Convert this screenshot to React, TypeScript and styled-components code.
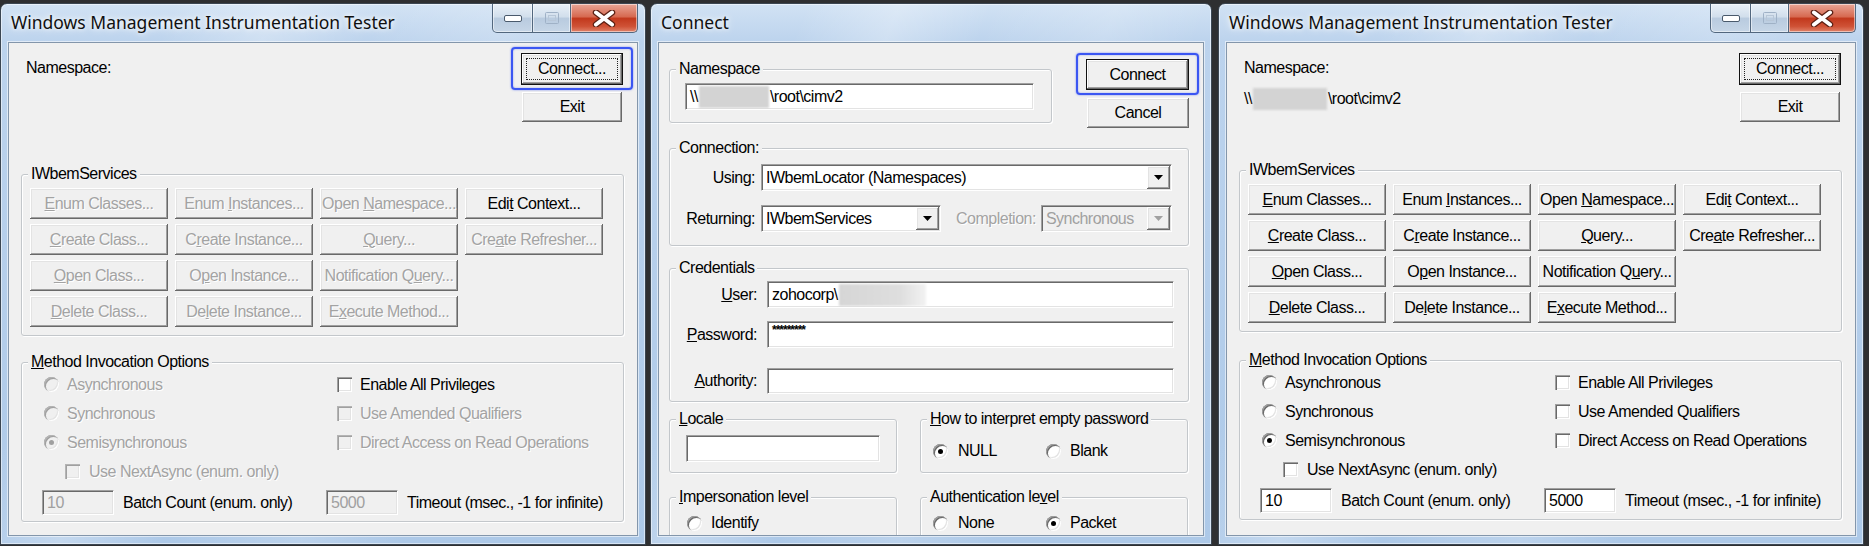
import React from "react";
import styled, { createGlobalStyle, css } from "styled-components";

const GlobalStyle = createGlobalStyle`
  html, body {
    margin: 0;
    padding: 0;
    background: #2e2f31;
  }
  body {
    font-family: "Liberation Sans", Arial, sans-serif;
    font-size: 16px;
    letter-spacing: -0.5px;
    color: #000;
  }
  #root {
    height: 546px;
    overflow: hidden;
  }
`;

const Desktop = styled.div`
  display: flex;
  align-items: flex-start;
  height: 546px;
  box-sizing: border-box;
  padding-top: 3px;
  background: #2e2f31;
  overflow: hidden;
`;

const Win = styled.div<{ $w: number; $gap?: number }>`
  flex: none;
  width: ${(p) => p.$w}px;
  margin-left: ${(p) => p.$gap ?? 0}px;
  box-sizing: border-box;
  border: 1px solid #3b4652;
  border-radius: 7px 7px 0 0;
  padding: 0 7px 8px;
  background: linear-gradient(
      112deg,
      rgba(255, 255, 255, 0) 20%,
      rgba(255, 255, 255, 0.28) 32%,
      rgba(255, 255, 255, 0) 44%,
      rgba(255, 255, 255, 0.18) 60%,
      rgba(255, 255, 255, 0) 72%
    ),
    linear-gradient(180deg, #d1e2f4 0px, #bcd3ed 38px, #adc9e8 100%);
  box-shadow: inset 0 0 0 1px rgba(255, 255, 255, 0.5);
`;

const TitleBar = styled.div`
  height: 38px;
  display: flex;
  justify-content: space-between;
  align-items: flex-start;
  padding-left: 3px;
`;

const Title = styled.div`
  font-family: "Noto Sans", "Open Sans", sans-serif;
  font-size: 17.5px;
  letter-spacing: 0;
  line-height: 20px;
  margin-top: 8px;
  color: #101010;
  text-shadow: 0 0 8px #fff, 0 0 4px rgba(255, 255, 255, 0.9);
`;

const Caption = styled.div`
  display: flex;
  height: 29px;
`;

const CapBtn = styled.div<{ $kind: "min" | "max" | "close" }>`
  width: ${(p) => (p.$kind === "close" ? 66 : p.$kind === "min" ? 39 : 37)}px;
  display: flex;
  align-items: center;
  justify-content: center;
  border: 1px solid #52677e;
  border-top: none;
  margin-left: -1px;
  box-shadow: inset 0 0 0 1px rgba(255, 255, 255, 0.5);
  background: ${(p) =>
    p.$kind === "close"
      ? "linear-gradient(180deg, #e8a696 0%, #d76a51 45%, #c2391d 52%, #cf5236 80%, #e0836b 100%)"
      : "linear-gradient(180deg, #e9f0f8 0%, #d2dfec 45%, #b9cbdf 52%, #c6d6e7 100%)"};
  &:first-child {
    margin-left: 0;
    border-bottom-left-radius: 5px;
  }
  &:last-child {
    border-bottom-right-radius: 5px;
  }
`;

const Client = styled.div`
  height: 492px;
  background: #f0f0f0;
  border: 1px solid #8396ab;
  box-shadow: 0 0 0 1px rgba(255, 255, 255, 0.55);
  overflow: hidden;
`;

/* ---------- classic controls ---------- */

const raised = css`
  background: #f0f0f0;
  box-shadow: inset -1px -1px 0 #696969, inset 1px 1px 0 #fff,
    inset -2px -2px 0 #a0a0a0, inset 2px 2px 0 #e3e3e3;
`;

const Btn = styled.button<{ $w: number; $h: number; $off?: boolean; $default?: boolean; $focus?: boolean }>`
  ${raised};
  position: relative;
  flex: none;
  width: ${(p) => p.$w}px;
  height: ${(p) => p.$h}px;
  box-sizing: border-box;
  padding: 0;
  border: ${(p) => (p.$default ? "1px solid #111" : "none")};
  font: inherit;
  letter-spacing: inherit;
  white-space: nowrap;
  color: ${(p) => (p.$off ? "#a3a3a3" : "#000")};
  text-shadow: ${(p) => (p.$off ? "1px 1px 0 #fff" : "none")};
  ${(p) =>
    p.$focus &&
    css`
      &::after {
        content: "";
        position: absolute;
        inset: 4px;
        border: 1px dotted #222;
      }
    `}
`;

const Marked = styled.div`
  position: relative;
  display: flex;
  &::before {
    content: "";
    position: absolute;
    inset: -6px -10px -5px -10px;
    border: 2px solid #3b56f2;
    border-radius: 4px;
    box-shadow: 0 0 2px rgba(59, 86, 242, 0.7), inset 0 0 2px rgba(59, 86, 242, 0.5);
  }
`;

const BtnCol = styled.div<{ $gap: number }>`
  display: flex;
  flex-direction: column;
  align-items: flex-end;
  gap: ${(p) => p.$gap}px;
`;

const Field = styled.div<{ $w?: number; $h?: number; $off?: boolean }>`
  box-sizing: border-box;
  flex: ${(p) => (p.$w ? "none" : "1")};
  width: ${(p) => (p.$w ? `${p.$w}px` : "auto")};
  min-width: 0;
  height: ${(p) => p.$h ?? 27}px;
  background: ${(p) => (p.$off ? "#f0f0f0" : "#fff")};
  color: ${(p) => (p.$off ? "#a0a0a0" : "#000")};
  border: 1px solid;
  border-color: #a0a0a0 #fff #fff #a0a0a0;
  box-shadow: inset 1px 1px 0 #696969, inset -1px -1px 0 #e3e3e3;
  padding: 0 1px 0 4px;
  display: flex;
  align-items: center;
  white-space: nowrap;
  overflow: hidden;
`;

const Stars = styled.span`
  font-size: 12px;
  letter-spacing: -1px;
  align-self: flex-start;
  margin-top: 1px;
  font-weight: bold;
`;

const Redacted = styled.span<{ $w: number; $fade?: boolean }>`
  display: inline-block;
  width: ${(p) => p.$w}px;
  height: 22px;
  margin: 0 1px;
  background: ${(p) =>
    p.$fade ? "linear-gradient(90deg, #d6d6d6 0%, #dedede 70%, #f2f2f2 100%)" : "#d3d3d3"};
  filter: blur(1.2px);
`;

const DropBtn = styled.span<{ $off?: boolean }>`
  ${raised};
  margin-left: auto;
  flex: none;
  width: 23px;
  height: 23px;
  display: flex;
  align-items: center;
  justify-content: center;
  color: ${(p) => (p.$off ? "#a0a0a0" : "#000")};
`;

const Tick = styled.span<{ $round?: boolean; $off?: boolean }>`
  position: relative;
  flex: none;
  width: 15px;
  height: 15px;
  box-sizing: border-box;
  border-radius: ${(p) => (p.$round ? "50%" : "0")};
  background: ${(p) => (p.$off ? "#f0f0f0" : "#fff")};
  box-shadow: ${(p) =>
    p.$off
      ? "inset 1px 1px 0 #b4b4b4, inset 2px 2px 0 #a0a0a0, inset -1px -1px 0 #fff, inset -2px -2px 0 #e3e3e3"
      : "inset 1px 1px 0 #a0a0a0, inset 2px 2px 0 #696969, inset -1px -1px 0 #fff, inset -2px -2px 0 #e3e3e3"};
`;

const Dot = styled.span<{ $off?: boolean }>`
  position: absolute;
  left: 5px;
  top: 5px;
  width: 5px;
  height: 5px;
  border-radius: 50%;
  background: ${(p) => (p.$off ? "#a0a0a0" : "#000")};
`;

const Option = styled.div<{ $off?: boolean; $gap?: number; $indent?: number }>`
  display: flex;
  align-items: center;
  gap: ${(p) => p.$gap ?? 8}px;
  padding-left: ${(p) => p.$indent ?? 0}px;
  white-space: nowrap;
  color: ${(p) => (p.$off ? "#a3a3a3" : "#000")};
  text-shadow: ${(p) => (p.$off ? "1px 1px 0 #fff" : "none")};
`;

const GroupBox = styled.fieldset`
  margin: 0;
  min-width: 0;
  padding: 0;
  border: 1px solid #c3c7cb;
  border-radius: 3px;
  box-shadow: inset 1px 1px 0 #fff, 1px 1px 0 #fff;
`;

const Legend = styled.legend`
  margin-left: 6px;
  padding: 0 3px;
  line-height: 16px;
  background: #f0f0f0;
  white-space: nowrap;
`;

const GroupBody = styled.div<{ $pad: string }>`
  padding: ${(p) => p.$pad};
`;

const Label = styled.span<{ $off?: boolean }>`
  white-space: nowrap;
  color: ${(p) => (p.$off ? "#a3a3a3" : "#000")};
  text-shadow: ${(p) => (p.$off ? "1px 1px 0 #fff" : "none")};
`;

function Group({
  legend,
  pad,
  top,
  width,
  children,
}: {
  legend: string;
  pad: string;
  top?: number;
  width?: number;
  children?: React.ReactNode;
}) {
  return (
    <GroupBox style={{ marginTop: top ?? 0, width }}>
      <Legend>
        <Mn text={legend} />
      </Legend>
      <GroupBody $pad={pad}>{children}</GroupBody>
    </GroupBox>
  );
}

/* ---------- tester window ---------- */

const TopRow = styled.div<{ $pad: string }>`
  display: flex;
  justify-content: space-between;
  align-items: flex-start;
  padding: ${(p) => p.$pad};
`;

const NsInfo = styled.div`
  display: flex;
  flex-direction: column;
  gap: 13px;
  padding-top: 6px;
  line-height: 18px;
`;

const NsPath = styled.div`
  display: flex;
  align-items: center;
  height: 18px;
`;

const TesterBody = styled.div`
  display: flex;
  flex-direction: column;
  padding: 0 13px 0 12px;
`;

const ServiceGrid = styled.div`
  display: grid;
  grid-template-columns: repeat(4, 138px);
  grid-auto-rows: 31px;
  gap: 5px 7px;
`;

const OptionGrid = styled.div`
  display: grid;
  grid-template-columns: 293px 1fr;
  grid-auto-rows: 29px;
  align-items: center;
  padding-left: 22px;
`;

const NumberRow = styled.div`
  display: grid;
  grid-template-columns: 284px 1fr;
  margin-top: 4px;
  padding-left: 20px;
`;

const NumberCell = styled.div`
  display: flex;
  align-items: center;
  gap: 9px;
`;

function Mn({ text }: { text: string }) {
  const i = text.indexOf("&");
  if (i < 0) return <>{text}</>;
  return (
    <>
      {text.slice(0, i)}
      <u>{text[i + 1]}</u>
      {text.slice(i + 2)}
    </>
  );
}

function Arrow() {
  return (
    <svg width="9" height="5" viewBox="0 0 9 5">
      <polygon points="0,0 9,0 4.5,5" fill="currentColor" />
    </svg>
  );
}

function Radio({ on, off }: { on?: boolean; off?: boolean }) {
  return <Tick $round $off={off}>{on && <Dot $off={off} />}</Tick>;
}

function CaptionButtons() {
  return (
    <Caption>
      <CapBtn $kind="min">
        <svg width="18" height="7" viewBox="0 0 18 7">
          <rect x="0.5" y="0.5" width="17" height="6" rx="1.5" fill="#fff" stroke="#4a5a6c" />
        </svg>
      </CapBtn>
      <CapBtn $kind="max">
        <svg width="14" height="12" viewBox="0 0 14 12">
          <rect x="0.5" y="0.5" width="13" height="11" rx="1" fill="none" stroke="#9fb1c6" />
          <rect x="3.5" y="3.5" width="7" height="5" fill="none" stroke="#b8c7d8" />
        </svg>
      </CapBtn>
      <CapBtn $kind="close">
        <svg width="24" height="17" viewBox="0 0 24 17">
          <path d="M4 2.5 L20 14.5 M20 2.5 L4 14.5" stroke="#5a2014" strokeWidth="6.4" strokeLinecap="round" />
          <path d="M4 2.5 L20 14.5 M20 2.5 L4 14.5" stroke="#fff" strokeWidth="4" strokeLinecap="round" />
        </svg>
      </CapBtn>
    </Caption>
  );
}

const services: (string | null)[] = [
  "&Enum Classes...",
  "Enum &Instances...",
  "Open &Namespace...",
  "Edi&t Context...",
  "&Create Class...",
  "C&reate Instance...",
  "&Query...",
  "Cre&ate Refresher...",
  "&Open Class...",
  "O&pen Instance...",
  "Notification Q&uery...",
  null,
  "&Delete Class...",
  "De&lete Instance...",
  "E&xecute Method...",
  null,
];

function TesterWindow({ live, gap, marked }: { live: boolean; gap?: number; marked?: boolean }) {
  const connect = (
    <Btn $w={102} $h={32} $default $focus>
      Connect...
    </Btn>
  );
  return (
    <Win $w={646} $gap={gap}>
      <TitleBar>
        <Title>Windows Management Instrumentation Tester</Title>
        <CaptionButtons />
      </TitleBar>
      <Client>
        <TopRow $pad="10px 14px 0 17px">
          <NsInfo>
            <span>Namespace:</span>
            {live && (
              <NsPath>
                \\<Redacted $w={74} />\root\cimv2
              </NsPath>
            )}
          </NsInfo>
          <BtnCol $gap={7}>
            {marked ? <Marked>{connect}</Marked> : connect}
            <Btn $w={100} $h={30} style={{ marginRight: 1 }}>
              Exit
            </Btn>
          </BtnCol>
        </TopRow>
        <TesterBody>
          <Group legend="IWbemServices" pad="6px 0 8px 8px" top={live ? 40 : 44}>
            <ServiceGrid>
              {services.map((s, i) =>
                s ? (
                  <Btn key={i} $w={138} $h={31} $off={!live && !s.startsWith("Edi")}>
                    <Mn text={s} />
                  </Btn>
                ) : (
                  <span key={i} />
                )
              )}
            </ServiceGrid>
          </Group>
          <Group legend="&Method Invocation Options" pad="0 0 6px 0" top={live ? 20 : 18}>
            <OptionGrid>
              <Option $off={!live}>
                <Radio off={!live} />
                Asynchronous
              </Option>
              <Option>
                <Tick />
                Enable All Privileges
              </Option>
              <Option $off={!live}>
                <Radio off={!live} />
                Synchronous
              </Option>
              <Option $off={!live}>
                <Tick $off={!live} />
                Use Amended Qualifiers
              </Option>
              <Option $off={!live}>
                <Radio on off={!live} />
                Semisynchronous
              </Option>
              <Option $off={!live}>
                <Tick $off={!live} />
                Direct Access on Read Operations
              </Option>
              <Option $off={!live} $indent={21} $gap={9}>
                <Tick $off={!live} />
                Use NextAsync (enum. only)
              </Option>
            </OptionGrid>
            <NumberRow>
              <NumberCell>
                <Field $w={72} $h={25} $off={!live}>
                  10
                </Field>
                <Label>Batch Count (enum. only)</Label>
              </NumberCell>
              <NumberCell>
                <Field $w={72} $h={25} $off={!live}>
                  5000
                </Field>
                <Label>Timeout (msec., -1 for infinite)</Label>
              </NumberCell>
            </NumberRow>
          </Group>
        </TesterBody>
      </Client>
    </Win>
  );
}

/* ---------- connect dialog ---------- */

const DialogBody = styled.div`
  display: flex;
  flex-direction: column;
  padding: 0 14px 0 10px;
`;

const FormRow = styled.div<{ $label: number; $gap: number; $top?: number }>`
  display: grid;
  grid-template-columns: ${(p) => p.$label}px 1fr;
  column-gap: ${(p) => p.$gap}px;
  align-items: center;
  margin-top: ${(p) => p.$top ?? 0}px;
`;

const RightLabel = styled.span`
  text-align: right;
  white-space: nowrap;
`;

const Inline = styled.div`
  display: flex;
  align-items: center;
`;

const Pair = styled.div<{ $top: number }>`
  display: grid;
  grid-template-columns: 228px 268px;
  column-gap: 23px;
  margin-top: ${(p) => p.$top}px;
`;

const RadioPair = styled.div`
  display: grid;
  grid-template-columns: 113px 1fr;
  height: 24px;
  align-items: center;
`;

function ConnectDialog() {
  return (
    <Win $w={562} $gap={4}>
      <TitleBar>
        <Title>Connect</Title>
      </TitleBar>
      <Client>
        <TopRow $pad="16px 14px 0 10px">
          <Group legend="Namespace" pad="6px 0 12px 15px" top={2} width={381}>
            <Field $w={349}>
              \\<Redacted $w={70} />\root\cimv2
            </Field>
          </Group>
          <BtnCol $gap={8}>
            <Marked>
              <Btn $w={103} $h={31} $default>
                Connect
              </Btn>
            </Marked>
            <Btn $w={102} $h={30}>
              Cancel
            </Btn>
          </BtnCol>
        </TopRow>
        <DialogBody>
          <Group legend="Connection:" pad="8px 16px 13px 5px" top={12}>
            <FormRow $label={80} $gap={6}>
              <RightLabel>Using:</RightLabel>
              <Field>
                IWbemLocator (Namespaces)
                <DropBtn>
                  <Arrow />
                </DropBtn>
              </Field>
            </FormRow>
            <FormRow $label={80} $gap={6} $top={14}>
              <RightLabel>Returning:</RightLabel>
              <Inline>
                <Field $w={180}>
                  IWbemServices
                  <DropBtn>
                    <Arrow />
                  </DropBtn>
                </Field>
                <Label $off style={{ margin: "0 5px 0 15px" }}>
                  Completion:
                </Label>
                <Field $off>
                  Synchronous
                  <DropBtn $off>
                    <Arrow />
                  </DropBtn>
                </Field>
              </Inline>
            </FormRow>
          </Group>
          <Group legend="Credentials" pad="5px 14px 7px 5px" top={14}>
            <FormRow $label={82} $gap={10}>
              <RightLabel>
                <Mn text="&User:" />
              </RightLabel>
              <Field>
                zohocorp\<Redacted $w={87} $fade />
              </Field>
            </FormRow>
            <FormRow $label={82} $gap={10} $top={13}>
              <RightLabel>
                <Mn text="&Password:" />
              </RightLabel>
              <Field>
                <Stars>*********</Stars>
              </Field>
            </FormRow>
            <FormRow $label={82} $gap={10} $top={20}>
              <RightLabel>
                <Mn text="&Authority:" />
              </RightLabel>
              <Field $h={26} />
            </FormRow>
          </Group>
          <Pair $top={9}>
            <Group legend="&Locale" pad="8px 0 9px 16px">
              <Field $w={194} />
            </Group>
            <Group legend="&How to interpret empty password" pad="12px 0 9px 12px">
              <RadioPair>
                <Option $gap={10}>
                  <Radio on />
                  NULL
                </Option>
                <Option $gap={9}>
                  <Radio />
                  Blank
                </Option>
              </RadioPair>
            </Group>
          </Pair>
          <Pair $top={16}>
            <Group legend="&Impersonation level" pad="6px 0 40px 17px">
              <RadioPair>
                <Option $gap={9}>
                  <Radio />
                  Identify
                </Option>
              </RadioPair>
            </Group>
            <Group legend="Authentication le&vel" pad="6px 0 40px 12px">
              <RadioPair>
                <Option $gap={10}>
                  <Radio />
                  None
                </Option>
                <Option $gap={9}>
                  <Radio on />
                  Packet
                </Option>
              </RadioPair>
            </Group>
          </Pair>
        </DialogBody>
      </Client>
    </Win>
  );
}

export default function App() {
  return (
    <>
      <GlobalStyle />
      <Desktop>
        <TesterWindow live={false} marked />
        <ConnectDialog />
        <TesterWindow live gap={6} />
      </Desktop>
    </>
  );
}
